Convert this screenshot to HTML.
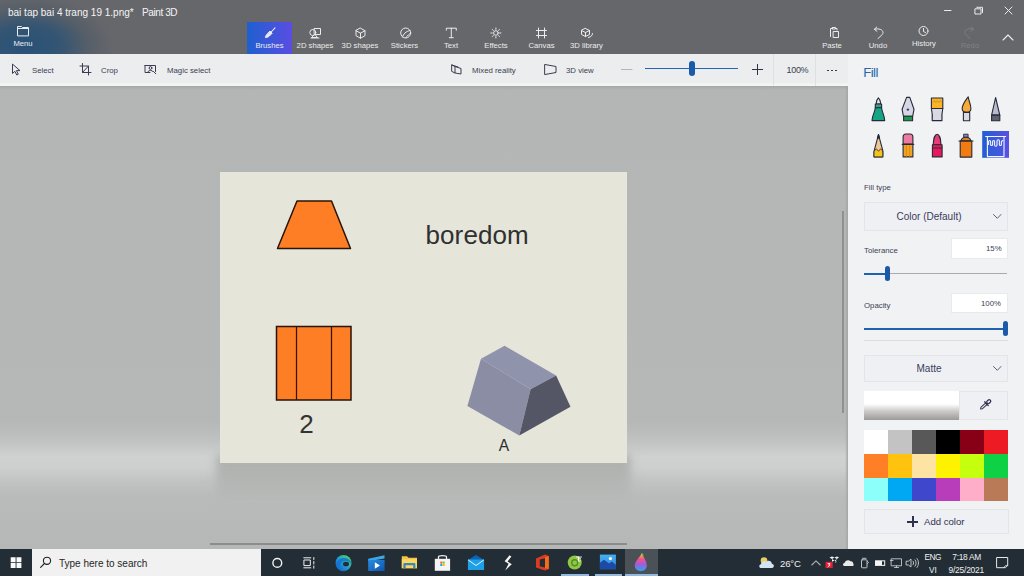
<!DOCTYPE html>
<html><head><meta charset="utf-8">
<style>
*{margin:0;padding:0;box-sizing:border-box}
html,body{width:1024px;height:576px;overflow:hidden;font-family:"Liberation Sans",sans-serif;background:#b5b7b7;position:relative}
.a{position:absolute}
svg{position:absolute;overflow:visible}
#title{left:0;top:0;width:1024px;height:54px;background:#66676b}
#blueglow{left:0;top:0;width:300px;height:54px;background:radial-gradient(ellipse 88px 52px at 26px 46px,rgba(40,82,120,1) 0%,rgba(44,82,116,.85) 40%,rgba(60,80,100,.35) 72%,rgba(70,85,100,0) 100%)}
.wt{color:#f4f4f4;font-size:10px;white-space:nowrap;line-height:12px}
.tl{color:#ececec;font-size:7.7px;white-space:nowrap;text-align:center;line-height:10px}
#tb2{left:0;top:54px;width:848px;height:32px;background:linear-gradient(#ecedee 0%,#ecedee 90%,#f3f4f4 94%,#f3f4f4 100%)}
.dk{color:#3a3d50;font-size:7.8px;white-space:nowrap;line-height:9px}
#work{left:0;top:86px;width:848px;height:463px;background:linear-gradient(#b4b6b5 0%,#b6b8b8 72.5%,#c0c2c2 76.5%,#d0d2d1 80.2%,#cdcfce 82.5%,#c1c3c3 85.5%,#b9bbbb 89%,#b6b8b7 100%)}
#panel{left:848px;top:54px;width:176px;height:495px;background:#f1f2f4}
.pl{color:#3d4055;font-size:7.8px;white-space:nowrap;line-height:9px}
.dd{background:#eff0f3;border:1px solid #e4e5e9}
.inp{background:#fff;border:1px solid #e8e9ec}
#task{left:0;top:549px;width:1024px;height:27px;background:#232d35}
.tt{color:#f0f0f0;white-space:nowrap;line-height:9px}
</style></head><body>
<div id="title" class="a"></div>
<div id="blueglow" class="a"></div>
<div class="a wt" style="left:8px;top:6.7px">bai tap bai 4 trang 19 1.png*</div>
<div class="a wt" style="left:142px;top:6.7px;letter-spacing:-0.4px">Paint 3D</div>

<!-- Brushes tab -->
<div class="a" style="left:247px;top:22px;width:45px;height:32px;background:linear-gradient(90deg,#1f60d0,#5a4de2)"></div>
<div class="a tl" style="left:8px;top:39px;width:30px">Menu</div>
<div class="a tl" style="left:247px;top:41px;width:45px">Brushes</div>
<div class="a tl" style="left:292px;top:41px;width:46px">2D shapes</div>
<div class="a tl" style="left:338px;top:41px;width:44px">3D shapes</div>
<div class="a tl" style="left:382px;top:41px;width:45px">Stickers</div>
<div class="a tl" style="left:428px;top:41px;width:46px">Text</div>
<div class="a tl" style="left:473px;top:41px;width:46px">Effects</div>
<div class="a tl" style="left:519px;top:41px;width:45px">Canvas</div>
<div class="a tl" style="left:564px;top:41px;width:45px">3D library</div>
<div class="a tl" style="left:817px;top:41px;width:30px">Paste</div>
<div class="a tl" style="left:863px;top:41px;width:30px">Undo</div>
<div class="a tl" style="left:906px;top:39px;width:36px">History</div>
<div class="a tl" style="left:955px;top:41px;width:30px;color:#808085">Redo</div>

<!-- toolbar 2 -->
<div id="tb2" class="a"></div>
<div class="a dk" style="left:32px;top:66px">Select</div>
<div class="a dk" style="left:101px;top:66px">Crop</div>
<div class="a dk" style="left:167px;top:66px">Magic select</div>
<div class="a dk" style="left:472px;top:66px">Mixed reality</div>
<div class="a dk" style="left:566px;top:66px">3D view</div>
<div class="a" style="left:773px;top:54px;width:1px;height:32px;background:#dfe0e1"></div>
<div class="a" style="left:815px;top:54px;width:1px;height:32px;background:#dfe0e1"></div>
<div class="a dk" style="left:786.5px;top:65.7px;font-size:9px;letter-spacing:-0.3px">100%</div>
<!-- zoom slider -->
<div class="a" style="left:621px;top:69px;width:11px;height:1px;background:#b9babd"></div>
<div class="a" style="left:645px;top:67.6px;width:93px;height:1.6px;background:#2265b2"></div>
<div class="a" style="left:689px;top:61px;width:6px;height:15px;border-radius:3px;background:#1a5aa8"></div>
<div class="a" style="left:752px;top:69px;width:11px;height:1.2px;background:#2f3246"></div>
<div class="a" style="left:757px;top:64px;width:1.2px;height:11px;background:#2f3246"></div>
<div class="a" style="left:827px;top:70px;width:2.2px;height:1px;background:#3a3d50"></div><div class="a" style="left:831px;top:70px;width:2.2px;height:1px;background:#3a3d50"></div><div class="a" style="left:835px;top:70px;width:2.2px;height:1px;background:#3a3d50"></div>

<!-- workspace -->
<div id="work" class="a"></div>
<div class="a" style="left:0;top:86px;width:848px;height:4px;background:linear-gradient(#a6a8a7,rgba(179,181,181,0))"></div>
<div class="a" style="left:845px;top:86px;width:3px;height:463px;background:linear-gradient(90deg,rgba(160,162,161,0),#a3a5a4)"></div>
<!-- shadow beneath canvas -->
<div class="a" style="left:216px;top:455px;width:415px;height:45px;background:linear-gradient(#aeb0ae,#b2b4b2 40%,#b6b8b7 80%,#b7b9b8);filter:blur(4px)"></div>
<div class="a" style="left:842px;top:211px;width:2px;height:202px;background:#8f9191"></div>
<div class="a" style="left:210px;top:543px;width:417px;height:2px;background:#8b8d8d"></div>

<!-- canvas -->
<div class="a" style="left:220px;top:172px;width:407px;height:291px;background:#e5e5da"></div>
<svg style="left:0;top:0" width="1024" height="576" viewBox="0 0 1024 576">
  <polygon points="297,201 331.5,201 350.5,248.5 277.5,248.5" fill="#fe7e26" stroke="#2a1408" stroke-width="1.5" stroke-linejoin="round"/>
  <rect x="276.5" y="326.5" width="74.5" height="73.5" fill="#fe7e26" stroke="#2a1408" stroke-width="1.5"/>
  <line x1="296.5" y1="326.5" x2="296.5" y2="400" stroke="#3a1204" stroke-width="1.25"/>
  <line x1="331.5" y1="326.5" x2="331.5" y2="400" stroke="#3a1204" stroke-width="1.25"/>
  <polygon points="504.6,345.8 556.1,375.6 530.6,389.2 481,358.7" fill="#9093ac"/>
  <polygon points="481,358.7 530.6,389.2 519.3,435.4 467.4,406.1" fill="#8a8da4"/>
  <polygon points="530.6,389.2 556.1,375.6 570.5,406.8 519.3,435.4" fill="#545665"/>
</svg>
<div class="a" style="left:425.5px;top:220.3px;font-size:26px;color:#303030;white-space:nowrap;line-height:30px;letter-spacing:0.1px">boredom</div>
<div class="a" style="left:299.2px;top:409.6px;font-size:26px;color:#333;line-height:28px">2</div>
<div class="a" style="left:498.8px;top:438px;font-size:15.6px;color:#2d2d2d;line-height:16px">A</div>

<!-- right panel -->
<div id="panel" class="a"></div>
<div class="a" style="left:863.3px;top:64.5px;font-size:13.2px;color:#2766a8;line-height:15px;letter-spacing:-0.6px">Fill</div>
<div class="a pl" style="left:864px;top:183px">Fill type</div>
<div class="a dd" style="left:864px;top:202px;width:144px;height:29px"></div>
<div class="a" style="left:864px;top:210.8px;width:130px;text-align:center;font-size:10px;color:#3a3d5c;line-height:12px">Color (Default)</div>
<div class="a pl" style="left:864px;top:246px">Tolerance</div>
<div class="a inp" style="left:951px;top:238px;width:57px;height:21px"></div>
<div class="a pl" style="left:986px;top:244px">15%</div>
<div class="a" style="left:864px;top:273px;width:23px;height:2px;background:#1d63b0"></div>
<div class="a" style="left:887px;top:273px;width:120px;height:1px;background:#a9aaad"></div>
<div class="a" style="left:885px;top:266px;width:5px;height:15px;border-radius:2.5px;background:#1a5aa8"></div>
<div class="a pl" style="left:864px;top:301px">Opacity</div>
<div class="a inp" style="left:951px;top:293px;width:57px;height:20px"></div>
<div class="a pl" style="left:981px;top:299px">100%</div>
<div class="a" style="left:864px;top:328px;width:140px;height:2px;background:#1d63b0"></div>
<div class="a" style="left:1003px;top:321px;width:5px;height:15px;border-radius:2.5px;background:#1a5aa8"></div>
<div class="a" style="left:864px;top:340px;width:144px;height:1px;background:#dcdde0"></div>
<div class="a dd" style="left:864px;top:355px;width:144px;height:27px"></div>
<div class="a" style="left:864px;top:363px;width:130px;text-align:center;font-size:10px;color:#3a3d5c;line-height:12px">Matte</div>
<div class="a" style="left:864px;top:391px;width:95px;height:29px;background:linear-gradient(#fff 0%,#fff 45%,#cfcdcb 68%,#9c9a98 100%)"></div>
<div class="a dd" style="left:959px;top:391px;width:49px;height:29px"></div>

<!-- palette -->
<div class="a" style="left:864px;top:430px;width:144px;height:71px;display:grid;grid-template-columns:repeat(6,24px);grid-template-rows:24px 24px 23px">
<div style="background:#fff"></div><div style="background:#c3c3c3"></div><div style="background:#585858"></div><div style="background:#000"></div><div style="background:#880015"></div><div style="background:#ed1c24"></div>
<div style="background:#ff7f27"></div><div style="background:#ffc20e"></div><div style="background:#fde4a3"></div><div style="background:#fff200"></div><div style="background:#c4ff0e"></div><div style="background:#0ed145"></div>
<div style="background:#8cfffb"></div><div style="background:#00a8f3"></div><div style="background:#3f48cc"></div><div style="background:#b83dba"></div><div style="background:#ffaec9"></div><div style="background:#b97a57"></div>
</div>
<div class="a dd" style="left:864px;top:509px;width:145px;height:25px"></div>
<div class="a" style="left:924px;top:516px;font-size:9.6px;color:#2e3150;line-height:12px;white-space:nowrap">Add color</div>
<div class="a" style="left:907px;top:520.5px;width:11px;height:2px;background:#2e3150"></div>
<div class="a" style="left:911.5px;top:515.5px;width:2px;height:11px;background:#2e3150"></div>

<!-- taskbar -->
<div id="task" class="a"></div>
<div class="a" style="left:32px;top:549px;width:229px;height:27px;background:#f1f1f1"></div>
<div class="a" style="left:59px;top:557.5px;font-size:10px;color:#262626;line-height:12px;white-space:nowrap">Type here to search</div>
<div class="a" style="left:625px;top:549px;width:33px;height:27px;background:#4b5257"></div>
<div class="a" style="left:561px;top:574px;width:28px;height:2px;background:#93b9de"></div>
<div class="a" style="left:595px;top:574px;width:27px;height:2px;background:#93b9de"></div>
<div class="a" style="left:625px;top:574px;width:33px;height:2px;background:#93b9de"></div>
<div class="a tt" style="left:780px;top:559.3px;font-size:9.6px;letter-spacing:-0.2px">26°C</div>
<div class="a tt" style="left:924.5px;top:552.5px;font-size:8.3px;letter-spacing:-0.5px">ENG</div>
<div class="a tt" style="left:929px;top:565.6px;font-size:8.3px">VI</div>
<div class="a tt" style="left:952.3px;top:552.5px;font-size:8.4px;letter-spacing:-0.3px">7:18 AM</div>
<div class="a tt" style="left:948.5px;top:565.6px;font-size:8.4px;letter-spacing:-0.2px">9/25/2021</div>

<!-- ribbon icons -->
<svg style="left:0;top:0" width="1024" height="576" viewBox="0 0 1024 576" fill="none" stroke-linecap="round" stroke-linejoin="round">
 <g stroke="#ececec" stroke-width="1">
  <path d="M17.5 35.5V26.5H21.5L22.5 27.5H28.5V35.5Z M17.5 28.5H28.5"/>
  <!-- brush -->
  <path d="M275 27.8L271.2 32" stroke-width="1.1"/>
  <path d="M270.3 31.3L272.2 33.2L269.8 35.6L267.9 33.7Z" fill="#ececec"/>
  <path d="M267.9 33.7C266.5 34.2 265.8 35.5 265.4 37.6C267.5 37.3 269 36.8 269.8 35.6" fill="#ececec"/>
  <!-- 2D shapes -->
  <rect x="314.5" y="28.5" width="6" height="6"/>
  <circle cx="312.8" cy="32.5" r="3"/>
  <path d="M315 34.5L317.5 37.5H312Z M311 38H319"/>
  <!-- 3D shapes -->
  <path d="M360.5 28.2L365 30.7V35.7L360.5 38.2L356 35.7V30.7Z M356 30.7L360.5 33.2L365 30.7 M360.5 33.2V38.2"/>
  <!-- stickers -->
  <circle cx="405.7" cy="33" r="5"/>
  <path d="M402.5 37C403.5 34 405.5 31.5 410 30.5 M406 37.5C407.5 35.5 409 34 410.5 33.5"/>
  <!-- text T -->
  <path d="M446.3 30.2V28.2H456.3V30.2 M451.3 28.2V37.7 M449.3 37.7H453.3"/>
  <!-- effects -->
  <circle cx="495.9" cy="33" r="2.3"/>
  <path d="M495.9 28V29.3 M495.9 36.7V38 M490.9 33H492.2 M499.6 33H500.9 M492.4 29.5L493.3 30.4 M498.5 35.6L499.4 36.5 M499.4 29.5L498.5 30.4 M493.3 35.6L492.4 36.5"/>
  <!-- canvas -->
  <path d="M538.5 28V38 M544.5 28V38 M536.5 30.5H546.5 M536.5 35.5H546.5"/>
  <!-- 3d library -->
  <path d="M585.5 28.5L589.5 30.5V34.5L585.5 36.5L581.5 34.5V30.5Z M581.5 30.5L585.5 32.5L589.5 30.5 M585.5 32.5V36.5"/>
  <path d="M588.5 37.5C591 37 592.5 35.5 592.5 33.5"/>
  <!-- paste -->
  <path d="M830.5 36.5V28.5H832.5 M835.5 28.5H837 V30 M832.5 27.5H835.5V29H832.5Z M833.5 31.5H838.5V37.5H833.5Z"/>
  <!-- undo -->
  <path d="M876.8 27L874.3 29.3L876.9 31.3 M874.5 29.3C879 28 883 29.8 883 32.5C883 34 881.5 35.5 878 38.5"/>
  <!-- history -->
  <circle cx="923.5" cy="31" r="4.5"/>
  <path d="M923.5 28.5V31.5L925.5 32.5"/>
  <!-- chevron -->
  <path d="M1003 40L1008 35L1013 40" stroke-width="1.1"/>
  <!-- window controls -->
  <path d="M944.5 10.5H951"/>
  <path d="M975.3 8.8H981V14H975.3Z M976.8 7.3H982.5V12.5"/>
  <path d="M1005 7L1012 14 M1012 7L1005 14"/>
 </g>
 <g stroke="#808085" stroke-width="1">
  <path d="M971 26.8L973.5 29.1L970.9 31.1 M973.3 29.1C968.8 27.8 964.8 29.6 964.8 32.3C964.8 33.8 966.3 35.3 969.8 38.3"/>
 </g>
 <!-- toolbar2 icons -->
 <g stroke="#3a3d50" stroke-width="1">
  <path d="M12.5 64.5V73.5L14.8 71.3L16.8 75L18.3 74.2L16.4 70.6H19.6Z"/>
  <path d="M82.5 63.5V72.5H91 M80 66H88.5V75 M82.5 72.5L88.5 66"/>
  <path d="M145 65.5H155.5V71.5 M145 65.5V72.5H150"/>
  <circle cx="150.5" cy="68" r="1.4"/>
  <path d="M148 71.5C148 70 153 70 153 71.5 M153.5 71.5L155.8 73.8"/>
  <path d="M452 65L455 66.5V73L452 71.5Z M455 66.5L461 68.5V74L455 73 M452 65L458 67"/>
  <path d="M545 64.5L556 66.5V72.5L545 74.5Z" stroke-width="1"/>
  <path d="M621.5 69.5H632" stroke="#b5b6ba"/>
 </g>
 <!-- eyedropper -->
 <g transform="translate(980.3 409.2) rotate(-42)" stroke="#2e3150" stroke-width="1">
  <path d="M0.3 0L2 -1.1H8V1.1H2Z" fill="none"/>
  <path d="M8.3 -2.6V2.6" stroke-width="1.3"/>
  <rect x="9.2" y="-1.5" width="4.3" height="3" rx="1.4" fill="none" stroke-width="1.2"/>
 </g>
 <!-- dropdown chevrons -->
 <g stroke="#5d6070" stroke-width="1">
  <path d="M993.5 214.5L997.3 218.3L1001 214.5"/>
  <path d="M993.5 366.5L997.3 370.3L1001 366.5"/>
 </g>
</svg>

<!-- brush palette icons -->
<svg style="left:0;top:0" width="1024" height="576" viewBox="0 0 1024 576" stroke-linejoin="round" stroke-linecap="round">
 <g stroke="#262a36" stroke-width="1.1">
  <!-- marker -->
  <path d="M876.3 104V102.5C876.3 100.5 877.5 98.8 878.4 97.8C879.3 98.8 880.5 100.5 880.5 102.5V104Z" fill="#e0e8ee"/>
  <rect x="875.3" y="104" width="6.3" height="3.7" fill="#3f9d8c"/>
  <path d="M875.3 107.7H881.6C881.8 112 884.7 115.5 884.7 120.6H872C872 115.5 875.1 112 875.3 107.7Z" fill="#16a487"/>
  <!-- nib -->
  <path d="M906.6 97.4H909.8L914 109.3L912.7 116.2H903.4L902.1 109.3Z" fill="#d5d6e6"/>
  <circle cx="907.9" cy="109.6" r="1.2" fill="#3a3d55" stroke="none"/>
  <rect x="903.6" y="116.2" width="9" height="4.5" fill="#1b9a4b"/>
  <!-- oil brush -->
  <rect x="931.4" y="98" width="11.4" height="10.5" fill="#f8b52c"/>
  <path d="M933 102.5L934.5 100.5L936 102.5L937.5 100.5L939 102.5L940.5 100.5L941.5 102" stroke="#d28a10" stroke-width="0.8" fill="none"/>
  <path d="M931.4 108.5H942.8C942 112 941.6 116 942 120.6H932.2C932.6 116 932.2 112 931.4 108.5Z" fill="#d9d9e4"/>
  <!-- watercolor brush -->
  <path d="M968.2 96.8C966 100 962.2 104 962.2 108.8C962.2 111 964 112.4 966.5 112.4C969 112.4 970.9 111 970.9 108.5C970.9 104 968.6 101 968.2 96.8Z" fill="#f7aa3a"/>
  <rect x="963.4" y="112.4" width="6.3" height="8.4" fill="#d9d9e4"/>
  <!-- gray pencil -->
  <path d="M995.6 97.5L999.8 115.1H991.6Z" fill="#b9bacd"/>
  <rect x="991.6" y="115.1" width="8.2" height="5.6" fill="#5f6371"/>
  <!-- wood pencil -->
  <path d="M878.5 134.6L882.8 150.7V156.9H874.2V150.7Z" fill="#efc59a"/>
  <path d="M874.2 151L876.3 149L878.5 151L880.7 149L882.8 151V156.9H874.2Z" fill="#f4c419" stroke-width="0.9"/>
  <path d="M878.5 134.6L879.5 138.2H877.5Z" fill="#2a2d3a"/>
  <!-- eraser pencil -->
  <path d="M903.1 144.4V137C903.1 135 904.5 134 906 134H910C911.5 134 912.9 135 912.9 137V144.4Z" fill="#ee7aa2"/>
  <rect x="903.1" y="144.4" width="9.8" height="12.5" fill="#f3a326"/>
  <path d="M906.3 145V156.5 M909.6 145V156.5" stroke="#d4840f" stroke-width="0.8"/>
  <path d="M902.3 144.4H913.7" stroke-width="1.2"/>
  <!-- crayon -->
  <path d="M933.2 144.8C933.4 140 934.8 134.3 937.1 134.3C939.4 134.3 940.8 140 941 144.8Z" fill="#ea3a78"/>
  <rect x="932.4" y="144.8" width="9.7" height="12.1" fill="#e8185e"/>
  <path d="M932.6 148H942" stroke-width="0.9"/>
  <!-- spray can -->
  <rect x="964" y="134.2" width="4.1" height="3.1" fill="#8f80b8" stroke-width="0.9"/>
  <path d="M960.9 141C961.5 138.8 963.5 137.3 966 137.3C968.5 137.3 970.4 138.8 970.9 141Z" fill="#d9822c"/>
  <rect x="960.2" y="141" width="11.6" height="16.1" fill="#f27c0f"/>
  <path d="M959 141H973" stroke-width="1.2"/>
 </g>
 <!-- fill bucket selected -->
 <defs><linearGradient id="fg" x1="0" x2="1" y1="0" y2="0"><stop offset="0" stop-color="#1f5fd2"/><stop offset="1" stop-color="#5b4fe2"/></linearGradient></defs>
 <rect x="982.2" y="131" width="26.8" height="26.8" fill="url(#fg)"/>
 <path d="M987.6 137V156.6H1003.8V137Z" fill="#3a5fe0" opacity=".35"/>
 <g stroke="#f4f6ff" stroke-width="1.1" fill="none">
  <path d="M985.6 136.5H1005.6 M987.4 136.5V156.6H1004V136.5"/>
  <path d="M988.6 144.5V141.5Q988.6 140.5 989.6 140.5Q990.6 140.5 990.6 141.5V144.5Q990.6 145.5 991.6 145.5Q992.6 145.5 992.6 144.5V141.5Q992.6 140.5 993.6 140.5Q994.6 140.5 994.6 141.5V145Q994.6 146.2 995.8 146.2Q997 146.2 997 145V141Q997 139.8 998.2 139.8Q999.4 139.8 999.4 141V144.5Q999.4 145.5 1000.4 145.5Q1001.4 145.5 1001.4 144.5V141.5L1002.8 140.5"/>
 </g>
</svg>

<!-- taskbar icons -->
<svg style="left:0;top:0" width="1024" height="576" viewBox="0 0 1024 576" stroke-linejoin="round" stroke-linecap="round">
 <defs>
  <linearGradient id="edg" x1="0" y1="1" x2="1" y2="0"><stop offset="0" stop-color="#0f5bb5"/><stop offset=".4" stop-color="#1e8ee0"/><stop offset=".7" stop-color="#36bd92"/><stop offset="1" stop-color="#62d46a"/></linearGradient>
  <linearGradient id="mov" x1="0" y1="0" x2="1" y2="1"><stop offset="0" stop-color="#2a8de0"/><stop offset="1" stop-color="#0c55b0"/></linearGradient>
  <linearGradient id="p3d" x1="0" y1="0" x2="0" y2="1"><stop offset="0" stop-color="#f5d33a"/><stop offset=".3" stop-color="#f2528a"/><stop offset=".6" stop-color="#a65ad6"/><stop offset="1" stop-color="#25a8ee"/></linearGradient>
  <linearGradient id="pho" x1="0" y1="0" x2="0" y2="1"><stop offset="0" stop-color="#45b2f0"/><stop offset="1" stop-color="#2f7fe0"/></linearGradient>
 </defs>
 <!-- windows logo -->
 <g fill="#fafafa">
  <path d="M10.7 557.3H15.6V562.2H10.7Z M16.5 557.3H21.4V562.2H16.5Z M10.7 563.1H15.6V568H10.7Z M16.5 563.1H21.4V568H16.5Z"/>
 </g>
 <!-- search -->
 <g fill="none" stroke="#202020" stroke-width="1.1">
  <circle cx="47" cy="560.8" r="3.6"/>
  <path d="M44.4 563.5L40.6 567.3"/>
 </g>
 <!-- cortana -->
 <circle cx="277.3" cy="562.9" r="4.4" fill="none" stroke="#f4f4f4" stroke-width="1.4"/>
 <!-- task view -->
 <g fill="none" stroke="#f0f0f0" stroke-width="1">
  <path d="M303.8 557.8H310.8 M303.8 567.8H310.8"/>
  <rect x="304.3" y="560" width="6" height="5.6"/>
  <path d="M313.8 557.5V559.5 M313.8 561.5V564 M313.8 566V568.2"/>
 </g>
 <!-- edge -->
 <circle cx="343.5" cy="563" r="8" fill="url(#edg)"/>
 <path d="M336 565.5C336.5 560 341 557.5 345 558C349 558.5 351.5 561.5 351.5 564.5C350 561.5 347 560.5 344.5 561C341 561.5 339.5 564.5 340.5 567.5C341.5 570 344.5 571 347 570.5C343 572.5 337.5 570.5 336 565.5Z" fill="#1473d0" opacity=".85"/>
 <ellipse cx="346" cy="564" rx="3" ry="2.3" fill="#232d35"/>
 <!-- movies -->
 <path d="M368.2 558.8L384.5 555.2V558.4L368.2 561.2Z" fill="#3aa8ec"/>
 <rect x="368.2" y="560" width="16.4" height="11" fill="url(#mov)"/>
 <path d="M374.8 562.2L380 565.5L374.8 568.8Z" fill="#ffffff"/>
 <!-- explorer -->
 <path d="M401.8 556.2H407L408.5 557.8H417V568.2H401.8Z" fill="#f5c445"/>
 <rect x="401.8" y="559.2" width="15.2" height="9" fill="#fbd766"/>
 <path d="M404.5 568.2V564.2H414.3V568.2" fill="none" stroke="#3d86b5" stroke-width="2.2" stroke-linecap="butt"/>
 <!-- store -->
 <path d="M438.5 559V556.8C438.5 555.2 446.5 555.2 446.5 556.8V559" fill="none" stroke="#f2f2f2" stroke-width="1.3"/>
 <rect x="434.8" y="558.8" width="15.3" height="12" fill="#f4f4f4"/>
 <rect x="440.3" y="561.6" width="2" height="2" fill="#f35325"/>
 <rect x="442.7" y="561.6" width="2" height="2" fill="#81bc06"/>
 <rect x="440.3" y="564" width="2" height="2" fill="#05a6f0"/>
 <rect x="442.7" y="564" width="2" height="2" fill="#ffba08"/>
 <!-- mail -->
 <path d="M467.9 560L476 555L484.1 560Z" fill="#0b64b8"/>
 <rect x="467.9" y="559.5" width="16.2" height="10.5" fill="#1ea0e6"/>
 <path d="M468.5 560.2L476 565.5L483.5 560.2" fill="none" stroke="#e8f4ff" stroke-width="1"/>
 <!-- s app -->
 <path d="M509.5 555.2L504.6 561.3L508.6 563.8L505.2 570.4L511.8 564.2L507.6 561.5L511.4 556.5Z" fill="#f4f4f4"/>
 <!-- office -->
 <path d="M536 558.5L545 554.6L548.8 556V569L545 570.4L536 567.5V558.5Z M539.8 559.6V566.3L545 567.6V558.2Z" fill="#dc3a22" fill-rule="evenodd"/>
 <path d="M545 557.2V568.3L548.8 569V556Z" fill="#f56b1c"/>
 <!-- green disc -->
 <circle cx="574.7" cy="562.5" r="7" fill="#90c744"/>
 <circle cx="574.7" cy="562.8" r="3" fill="none" stroke="#4f8e28" stroke-width="1.4"/>
 <path d="M576.5 557H581.5 M578.5 557V561 M580.5 558.5A1.5 1.5 0 1 0 580.5 561" fill="none" stroke="#ffffff" stroke-width=".9"/>
 <!-- photos -->
 <rect x="599.9" y="554.6" width="16" height="14.6" fill="url(#pho)"/>
 <path d="M599.9 569.2V563L604 559.8L609 563.5L612 561.5L615.9 565V569.2Z" fill="#1c4aa5"/>
 <circle cx="610.4" cy="558.6" r="1.6" fill="#ffffff"/>
 <!-- paint 3d -->
 <path d="M641.8 553.6C639.5 557.5 634.8 561.5 634.8 565.8C634.8 569 637.8 571.2 640.8 571.2C644 571.2 646.8 569 646.8 565.5C646.8 561.5 643.8 557.5 641.8 553.6Z" fill="url(#p3d)"/>
 <path d="M641.8 553.6L643 554.6L642.6 556" fill="none" stroke="#5fc44a" stroke-width="1.1"/>
 <!-- weather -->
 <circle cx="764" cy="560.5" r="3.3" fill="#e9cf62"/>
 <path d="M760.5 567.9C758.8 567.9 758.8 564.5 761 564.3C761.2 561.5 764.5 560.5 766.3 562.2C767.3 560 771.8 560.5 771.8 563.8C774.5 563.8 774.5 567.9 772 567.9Z" fill="#d2e5f5"/>
 <!-- chevron -->
 <path d="M811.8 565L816 560.8L820.2 565" fill="none" stroke="#a8adb2" stroke-width="1.1"/>
 <!-- dropbox tray -->
 <rect x="825.5" y="561.8" width="7.2" height="6.2" fill="#e51e35"/>
 <path d="M828 563.5H830L828.6 565H830.2L828 566.8" fill="none" stroke="#fff" stroke-width=".8"/>
 <path d="M829.5 557.5L832 556.4L834.5 557.5L832 559Z M834.5 557.5L837 556.4L839 557.5L836.8 559Z M832 559L834.5 560.5L832 561.8 M836.8 559L834.5 560.5L836.8 561.8L835 563" fill="#f4f4f4"/>
 <!-- onedrive -->
 <path d="M844.5 566C842.5 566 842.5 563.2 844.5 563C845 560.5 848.5 559.2 850.5 561.2C852.5 561 853.6 562.8 853.3 564C854 564.5 853.8 566 852.8 566Z" fill="#e8e9ea"/>
 <!-- phone -->
 <g fill="none" stroke="#d0d2d4" stroke-width=".9">
  <rect x="861.5" y="559.8" width="5.5" height="8" rx=".6"/>
  <path d="M862.5 558.3H866 M867.5 561.5L868.5 562.5L867.5 563.5"/>
 </g>
 <!-- battery -->
 <rect x="875" y="560.3" width="10.2" height="5.6" fill="#f4f4f4"/>
 <rect x="882" y="561.3" width="2.2" height="3.6" fill="#232d35"/>
 <!-- network -->
 <g fill="none" stroke="#c8cacc" stroke-width=".9">
  <rect x="891.5" y="558.8" width="10" height="7"/>
  <path d="M890.5 560.5H893 M894.5 567.5H898.5 M896.5 565.8V567.5"/>
 </g>
 <!-- volume -->
 <g fill="none" stroke="#d0d2d4" stroke-width=".9">
  <path d="M906.5 561.2H908.5L911 559V567L908.5 565H906.5Z"/>
  <path d="M913 561.2C913.8 562.2 913.8 563.8 913 564.8 M915 559.8C916.5 561.5 916.5 564.5 915 566.3 M917 558.5C919 561 919 565 917 567.5"/>
 </g>
 <!-- notification -->
 <g fill="none" stroke="#e8e8e8" stroke-width="1">
  <path d="M997 557.5H1007.7V565.5L1005.5 567.7H997Z"/>
  <path d="M1004 567.5C1004.5 566 1005.5 565.5 1007.5 565.5"/>
 </g>
</svg>
</body></html>
